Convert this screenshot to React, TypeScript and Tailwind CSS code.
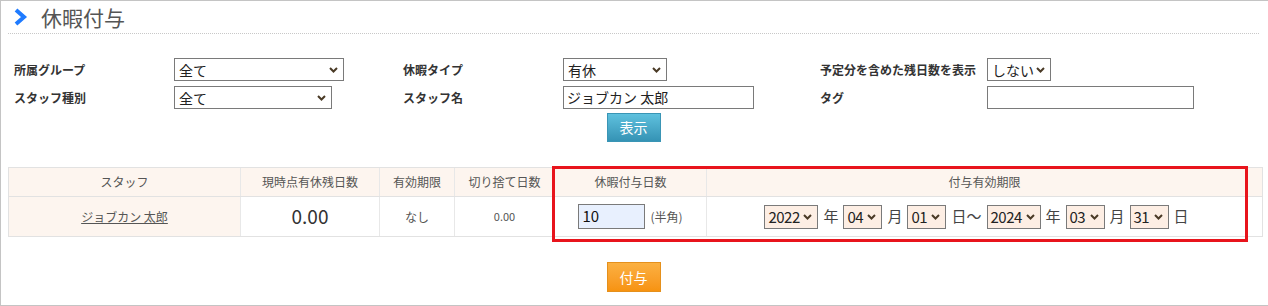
import React from "react";

const Chevron = () => (
  <svg width="9" height="6" viewBox="0 0 9 6" className="pointer-events-none absolute right-[5px] top-1/2 -translate-y-1/2">
    <path d="M1 1 L4.5 4.5 L8 1" stroke="#4a3a26" strokeWidth="2" fill="none" />
  </svg>
);

function Sel({ value, w }: { value: string; w: string }) {
  return (
    <div className={`relative ${w} h-[23px] border border-[#7a7a7a] bg-white flex items-center pl-[4px] text-[14px] font-normal text-[#222]`}>
      <span className="leading-none">{value}</span>
      <Chevron />
    </div>
  );
}

function Sel2({ value, w }: { value: string; w: string }) {
  return (
    <div className={`relative ${w} h-[24px] border border-[#7a7a7a] bg-[#fdeee4] flex items-center pl-[3px] text-[15px] text-[#222] tracking-[-0.5px]`}>
      <span className="leading-none">{value}</span>
      <Chevron />
    </div>
  );
}

export default function App() {
  const font = { fontFamily: '"Noto Sans CJK JP", "Noto Sans", sans-serif' };
  return (
    <div style={font} className="relative w-[1268px] h-[306px] bg-white border-t border-l border-b border-[#c4c4c4] text-[#333] overflow-hidden">
      {/* title */}
      <div className="flex items-center h-[33px] mx-[7px] border-b border-dotted border-[#c8c8c8] w-[1251px]">
        <svg width="14" height="18" viewBox="0 0 14 18" className="ml-[6px]">
          <path d="M2 2 L10 9 L2 16" stroke="#1f7bff" strokeWidth="4" fill="none" strokeLinejoin="miter" />
        </svg>
        <span className="ml-[13px] text-[21px] text-[#555] leading-none">休暇付与</span>
      </div>

      {/* form */}
      <div className="mt-[24px] ml-[13px] flex flex-col gap-[5px] text-[12px] font-bold text-[#333]">
        <div className="flex items-center h-[23px]">
          <div className="w-[160px]">所属グループ</div>
          <div className="w-[229px]"><Sel value="全て" w="w-[170px]" /></div>
          <div className="w-[160px]">休暇タイプ</div>
          <div className="w-[257px]"><Sel value="有休" w="w-[104px]" /></div>
          <div className="w-[167px]">予定分を含めた残日数を表示</div>
          <div><Sel value="しない" w="w-[64px]" /></div>
        </div>
        <div className="flex items-center h-[23px]">
          <div className="w-[160px]">スタッフ種別</div>
          <div className="w-[229px]"><Sel value="全て" w="w-[158px]" /></div>
          <div className="w-[160px]">スタッフ名</div>
          <div className="w-[257px]">
            <div className="w-[191px] h-[23px] border border-[#7a7a7a] flex items-center pl-[3px] text-[14px] font-normal text-[#222]">ジョブカン 太郎</div>
          </div>
          <div className="w-[167px]">タグ</div>
          <div><div className="w-[207px] h-[23px] border border-[#7a7a7a]" /></div>
        </div>
      </div>

      <div className="flex justify-center mt-[4px] pr-[2px]">
        <div className="w-[54px] h-[29px] bg-gradient-to-b from-[#5ec1de] to-[#3593b5] border border-[#3a95b5] text-white text-[14px] flex items-center justify-center">表示</div>
      </div>

      {/* table */}
      <div className="mt-[25px] ml-[7px] w-[1255px] border border-[#e2e2e2] text-[12px] text-[#555]">
        <div className="flex h-[29px] bg-[#fdf5ef] border-b border-[#e2e2e2]">
          <div className="w-[232px] border-r border-[#e8e8e8] flex items-center justify-center">スタッフ</div>
          <div className="w-[139px] border-r border-[#e8e8e8] flex items-center justify-center">現時点有休残日数</div>
          <div className="w-[75px] border-r border-[#e8e8e8] flex items-center justify-center">有効期限</div>
          <div className="w-[100px] border-r border-[#e8e8e8] flex items-center justify-center">切り捨て日数</div>
          <div className="w-[152px] border-r border-[#e8e8e8] flex items-center justify-center">休暇付与日数</div>
          <div className="flex-1 flex items-center justify-center">付与有効期限</div>
        </div>
        <div className="flex h-[39px]">
          <div className="w-[232px] bg-[#fdf5ef] border-r border-[#e8e8e8] flex items-center justify-center">
            <span className="underline">ジョブカン 太郎</span>
          </div>
          <div className="w-[139px] border-r border-[#e8e8e8] flex items-center justify-center text-[19px] text-[#333]">0.00</div>
          <div className="w-[75px] border-r border-[#e8e8e8] flex items-center justify-center">なし</div>
          <div className="w-[100px] border-r border-[#e8e8e8] flex items-center justify-center text-[11px]">0.00</div>
          <div className="w-[152px] border-r border-[#e8e8e8] flex items-center justify-center gap-[5px]">
            <div className="w-[67px] h-[25px] border border-[#7a7a7a] bg-[#e8f0fe] flex items-center pl-[3px] text-[15px] text-[#111]">10</div>
            <span className="text-[12px]">(半角)</span>
          </div>
          <div className="flex-1 flex items-center justify-center gap-[5px] text-[15px] text-[#444] pr-[16px]">
            <Sel2 value="2022" w="w-[54px]" />
            <span>年</span>
            <Sel2 value="04" w="w-[39px]" />
            <span>月</span>
            <Sel2 value="01" w="w-[39px]" />
            <span>日～</span>
            <Sel2 value="2024" w="w-[54px]" />
            <span>年</span>
            <Sel2 value="03" w="w-[39px]" />
            <span>月</span>
            <Sel2 value="31" w="w-[39px]" />
            <span>日</span>
          </div>
        </div>
      </div>

      <div className="flex justify-center mt-[25px] pr-[2px]">
        <div className="w-[54px] h-[30px] bg-gradient-to-b from-[#fbb040] to-[#f7930f] border border-[#e5901c] text-white text-[14px] flex items-center justify-center">付与</div>
      </div>

      {/* annotation */}
      <div className="absolute left-[551px] top-[165px] w-[696px] h-[76px] border-[3px] border-[#e8141c] pointer-events-none" />
    </div>
  );
}
